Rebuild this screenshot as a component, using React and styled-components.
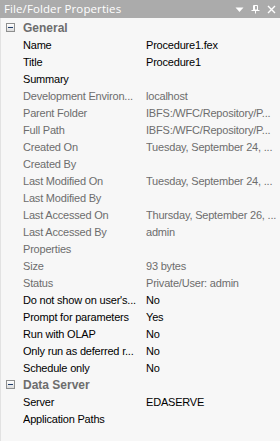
import React from "react";
import styled, { createGlobalStyle } from "styled-components";

const GlobalStyle = createGlobalStyle`
  html, body {
    margin: 0;
    padding: 0;
    background: #f7f7f7;
  }
  body {
    font-family: "Liberation Sans", Arial, sans-serif;
  }
`;

const Panel = styled.div`
  width: 280px;
  height: 441px;
  display: flex;
  flex-direction: column;
  background: #f7f7f7;
  overflow: hidden;
`;

const TitleBar = styled.div`
  height: 18px;
  flex: none;
  display: flex;
  align-items: center;
  justify-content: space-between;
  background: #ababab;
  padding: 0 4px 0 4px;
`;

const TitleText = styled.span`
  color: #ffffff;
  font-family: "Open Sans", "Noto Sans", sans-serif;
  font-size: 11.5px;
  line-height: 18px;
  letter-spacing: 0.1px;
`;

const TitleButtons = styled.div`
  display: flex;
  align-items: center;
  gap: 7px;
`;

const Grid = styled.div`
  display: flex;
  flex-direction: column;
  padding-top: 1px;
  border-left: 1px solid #e2e2e2;
  flex: 1;
`;

const Row = styled.div`
  display: grid;
  grid-template-columns: 22px 123px 1fr;
  height: 17px;
  align-items: center;
  font-size: 11px;
  letter-spacing: -0.2px;
  white-space: nowrap;
  overflow: hidden;
`;

const Cell = styled.span`
  color: ${p => (p.readOnly ? "#6d6d6d" : "#000000")};
  overflow: hidden;
`;

const CategoryTitle = styled.span`
  grid-column: 2 / 4;
  font-weight: bold;
  font-size: 12px;
  letter-spacing: 0;
  color: #6d6d6d;
`;

const Toggle = styled.span`
  width: 7px;
  height: 7px;
  margin-left: 5px;
  border: 1px solid #8e8f8f;
  background: linear-gradient(#ffffff, #dcdcdc);
  position: relative;
  &::after {
    content: "";
    position: absolute;
    left: 1px;
    right: 1px;
    top: 3px;
    height: 1px;
    background: #1f3d6b;
  }
`;

const general = [
  ["Name", "Procedure1.fex"],
  ["Title", "Procedure1"],
  ["Summary", ""],
  ["Development Environ...", "localhost", true],
  ["Parent Folder", "IBFS:/WFC/Repository/P...", true],
  ["Full Path", "IBFS:/WFC/Repository/P...", true],
  ["Created On", "Tuesday, September 24, ...", true],
  ["Created By", "", true],
  ["Last Modified On", "Tuesday, September 24, ...", true],
  ["Last Modified By", "", true],
  ["Last Accessed On", "Thursday, September 26, ...", true],
  ["Last Accessed By", "admin", true],
  ["Properties", "", true],
  ["Size", "93 bytes", true],
  ["Status", "Private/User: admin", true],
  ["Do not show on user's...", "No"],
  ["Prompt for parameters", "Yes"],
  ["Run with OLAP", "No"],
  ["Only run as deferred r...", "No"],
  ["Schedule only", "No"],
];

const dataServer = [
  ["Server", "EDASERVE"],
  ["Application Paths", ""],
];

function Category({ title, rows }) {
  return (
    <>
      <Row>
        <Toggle />
        <CategoryTitle>{title}</CategoryTitle>
      </Row>
      {rows.map(([label, value, readOnly]) => (
        <Row key={label}>
          <span />
          <Cell readOnly={readOnly}>{label}</Cell>
          <Cell readOnly={readOnly}>{value}</Cell>
        </Row>
      ))}
    </>
  );
}

export default function App() {
  return (
    <Panel>
      <GlobalStyle />
      <TitleBar>
        <TitleText>File/Folder Properties</TitleText>
        <TitleButtons>
          <svg width="9" height="9" viewBox="0 0 9 9">
            <path d="M0.5 2.5 H8.5 L4.5 7 Z" fill="#fff" />
          </svg>
          <svg width="9" height="10" viewBox="0 0 9 10">
            <path d="M2.5 1.5 H6.5 V6 H2.5 Z M3.5 1.5 V6 M0.5 6.5 H8.5 M4.5 6.5 V9.5" stroke="#fff" fill="none" />
          </svg>
          <svg width="9" height="9" viewBox="0 0 9 9">
            <path d="M1 1 L8 8 M8 1 L1 8" stroke="#fff" strokeWidth="1.4" />
          </svg>
        </TitleButtons>
      </TitleBar>
      <Grid>
        <Category title="General" rows={general} />
        <Category title="Data Server" rows={dataServer} />
      </Grid>
    </Panel>
  );
}
